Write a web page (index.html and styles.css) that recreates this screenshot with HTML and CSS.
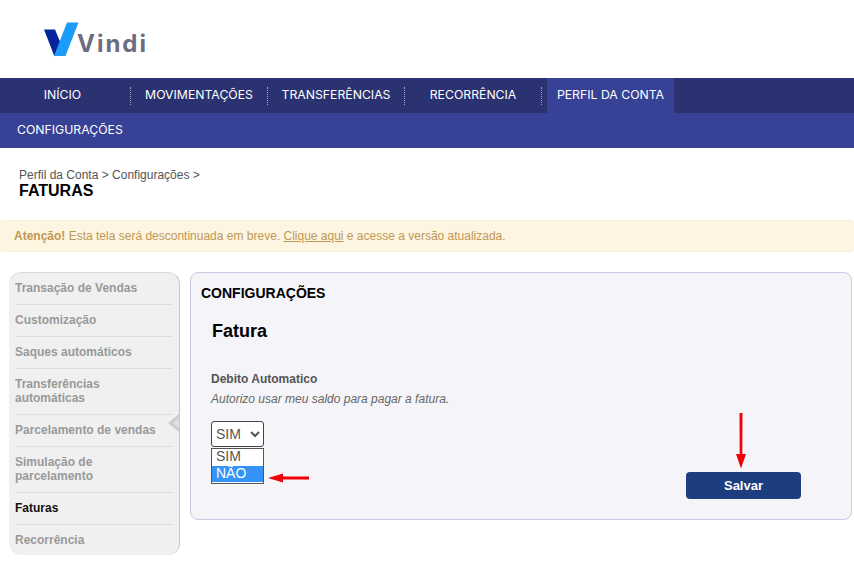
FILE: index.html
```html
<!DOCTYPE html>
<html lang="pt-BR">
<head>
<meta charset="utf-8">
<title>Faturas</title>
<link rel="stylesheet" href="styles.css">
</head>
<body>
<header class="brand">
  <svg class="brand-mark" width="36" height="36" viewBox="0 0 36 36" aria-hidden="true">
    <polygon points="0,7.5 11,7.5 17,22 10.5,34.5" fill="#06239b"/>
    <polygon points="23,0.5 34.5,0.5 21.5,34 10,34" fill="#1c9bf8"/>
  </svg>
  <span class="brand-name">Vindi</span>
</header>
<nav class="nav">
  <a class="nav-item nav-first">INÍCIO</a>
  <i class="nav-sep"></i>
  <a class="nav-item">MOVIMENTAÇÕES</a>
  <i class="nav-sep"></i>
  <a class="nav-item">TRANSFERÊNCIAS</a>
  <i class="nav-sep"></i>
  <a class="nav-item">RECORRÊNCIA</a>
  <i class="nav-sep"></i>
  <a class="nav-item nav-active">PERFIL DA CONTA</a>
</nav>
<div class="subnav">CONFIGURAÇÕES</div>
<div class="crumbs">
  <div class="crumb-path">Perfil da Conta &gt; Configurações &gt;</div>
  <h1 class="crumb-title">FATURAS</h1>
</div>
<div class="alert"><b>Atenção!</b> Esta tela será descontinuada em breve. <u>Clique aqui</u> e acesse a versão atualizada.</div>
<main class="layout">
  <aside class="side">
    <a class="side-item">Transação de Vendas</a>
    <a class="side-item">Customização</a>
    <a class="side-item">Saques automáticos</a>
    <a class="side-item">Transferências automáticas</a>
    <a class="side-item">Parcelamento de vendas</a>
    <a class="side-item">Simulação de parcelamento</a>
    <a class="side-item side-current">Faturas</a>
    <a class="side-item">Recorrência</a>
    <svg class="side-pointer" width="11" height="18" viewBox="0 0 11 18" aria-hidden="true">
      <polygon points="11,0 0,9 11,18" fill="#c9cdd0"/>
      <polygon points="11,4 5,9 11,14" fill="#dfe2e4"/>
    </svg>
  </aside>
  <section class="panel">
    <h2 class="panel-head">CONFIGURAÇÕES</h2>
    <h3 class="panel-title">Fatura</h3>
    <div class="field-label">Debito Automatico</div>
    <div class="field-hint">Autorizo usar meu saldo para pagar a fatura.</div>
    <select class="picker"><option>SIM</option><option>NÃO</option></select>
    <div class="picker-list">
      <div class="picker-option">SIM</div>
      <div class="picker-option picker-selected">NÃO</div>
    </div>
    <button class="save">Salvar</button>
    <svg class="arrow-left" width="42" height="10" viewBox="0 0 42 10" aria-hidden="true">
      <polygon points="0,5 15,0.5 15,3.5 41,3.5 41,6.5 15,6.5 15,9.5" fill="#f00008"/>
    </svg>
    <svg class="arrow-down" width="10" height="56" viewBox="0 0 10 56" aria-hidden="true">
      <polygon points="3.5,0 6.5,0 6.3,41 10,41 5,55.5 0,41 3.7,41" fill="#f00008"/>
    </svg>
  </section>
</main>
</body>
</html>
```
FILE: styles.css
```css
* { box-sizing: border-box; }
html, body { margin: 0; padding: 0; }
body { font-family: "Liberation Sans", Arial, sans-serif; background: #fff; color: #555; height: 569px; overflow: hidden; }
.brand { height: 78px; display: flex; align-items: flex-start; padding: 21.5px 0 0 44px; }
.brand-mark { display: block; flex: none; }
.brand-name { font-family: Inter, sans-serif; font-weight: 700; font-size: 24px; line-height: 28px; letter-spacing: 2px; color: #6b6d83; margin: 8px 0 0 -3px; }
.nav { height: 35px; background: #2b3272; display: flex; align-items: center; font-family: Inter, sans-serif; font-size: 12.25px; color: #fff; }
.nav-item { width: 136px; height: 35px; line-height: 33px; text-align: center; flex: none; }
.nav-first { width: 130px; padding-right: 5px; }
.nav-sep { width: 1px; height: 18px; flex: none; border-left: 1px dotted #a8abc4; }
.nav-active { width: 127px; margin-left: 5px; background: #374296; }
.subnav { height: 35px; background: #374296; color: #fff; font-family: Inter, sans-serif; font-size: 12.25px; line-height: 33px; padding-left: 17px; }
.crumbs { height: 72px; padding: 20px 0 0 19px; }
.crumb-path { font-size: 12px; line-height: 14px; color: #555; }
.crumb-title { margin: 0; font-size: 16px; line-height: 18px; font-weight: bold; color: #000; }
.alert { height: 32px; background: #fdf5e2; border: 1px solid #f9eed6; border-left: 0; border-right: 0; border-radius: 4px; padding-left: 14px; font-size: 12px; line-height: 30px; color: #c09853; }
.layout { display: flex; align-items: flex-start; gap: 10px; padding: 20px 2px 0 9px; }
.side { position: relative; width: 171px; height: 283px; flex: none; background: #f0f0f0; border-right: 1px solid #c4c6cc; border-top: 1px solid #d9d9dc; border-radius: 12px; padding: 0 6px; font-size: 12px; font-weight: bold; color: #999; }
.side-item { display: block; padding: 8px 0 9px; line-height: 14px; border-bottom: 1px solid #dedede; }
.side-item:last-of-type { border-bottom: 0; }
.side-current { color: #111; }
.side-pointer { position: absolute; right: 0; top: 141px; }
.panel { position: relative; flex: 1; height: 248px; background: #f4f4f9; border: 1px solid #c9cbe3; border-radius: 8px; padding: 0 0 0 10px; }
.panel-head { margin: 13px 0 0; font-size: 14px; line-height: 14px; font-weight: bold; color: #000; }
.panel-title { margin: 21px 0 0 11px; font-size: 18px; line-height: 20px; font-weight: bold; color: #000; }
.field-label { margin: 31px 0 0 10px; font-size: 12px; line-height: 14px; font-weight: bold; color: #555; }
.field-hint { margin: 6px 0 0 10px; font-size: 12px; line-height: 14px; font-style: italic; color: #666; }
.picker { display: block; margin: 15px 0 0 10px; width: 53px; height: 26px; font-family: "Liberation Sans", sans-serif; font-size: 14px; color: #555; background: #fff; border: 1px solid #444; border-radius: 3px; padding: 0; }
.picker-list { margin: 1px 0 0 10px; width: 53px; height: 36px; background: #fff; border: 1px solid #555; font-size: 14px; color: #555; }
.picker-option { height: 17px; line-height: 14px; padding-left: 4px; }
.picker-selected { height: 16px; background: #3393f7; color: #fff; }
.save { position: absolute; left: 495px; top: 199px; width: 115px; height: 27px; padding: 0; border: 0; border-radius: 4px; background: #1c3d80; color: #fff; font-family: "Liberation Sans", sans-serif; font-size: 13px; font-weight: bold; }
.arrow-left { position: absolute; left: 77px; top: 200px; }
.arrow-down { position: absolute; left: 545px; top: 140px; }
```
